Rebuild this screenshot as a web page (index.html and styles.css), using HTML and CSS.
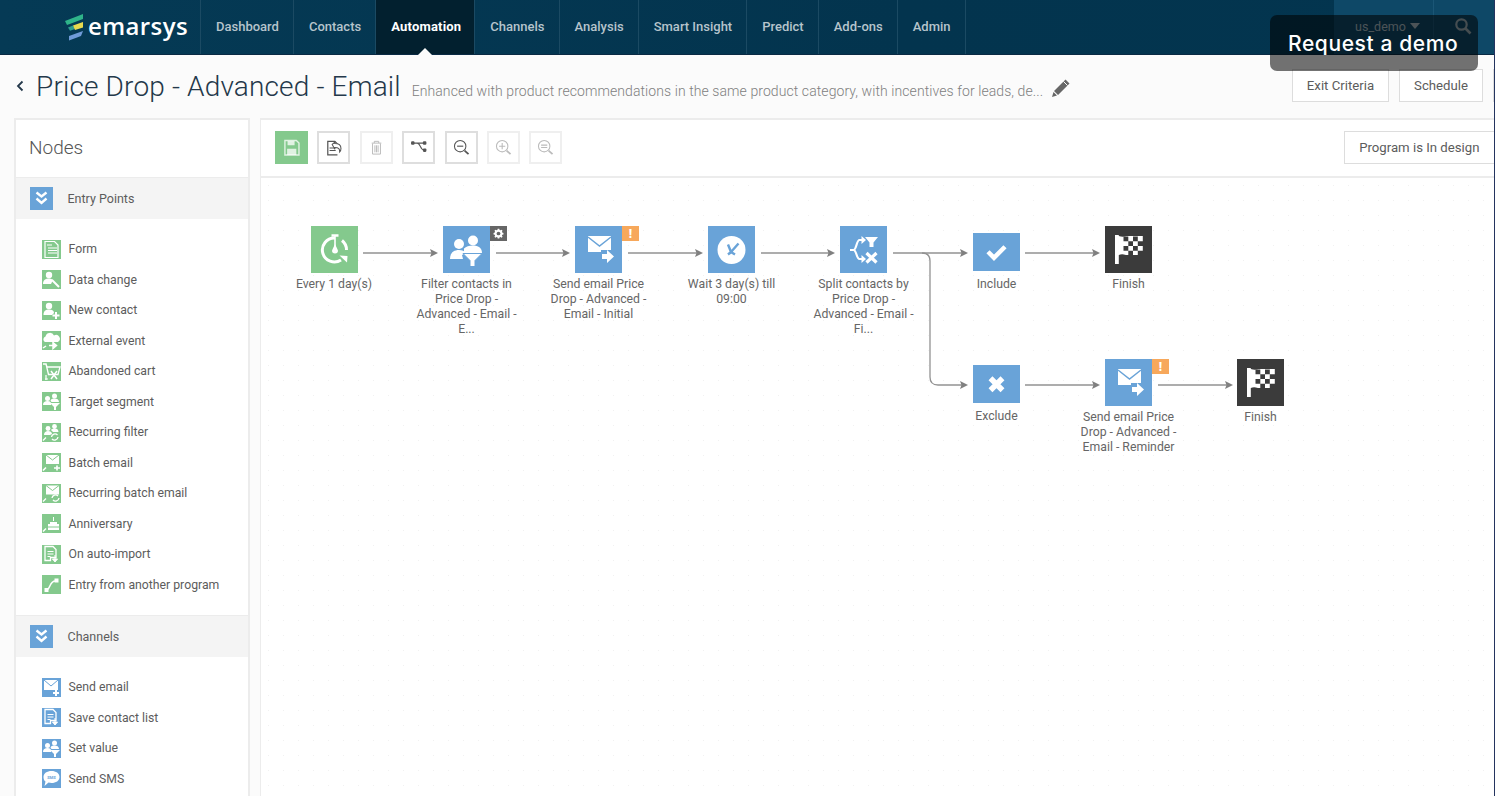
FILE: index.html
```html
<!DOCTYPE html>
<html lang="en">
<head>
<meta charset="utf-8">
<title>Price Drop - Advanced - Email</title>
<link rel="stylesheet" href="styles.css">
</head>
<body>
<svg class="defs" xmlns="http://www.w3.org/2000/svg">
  <symbol id="g-form" viewBox="0 0 19 19"><path d="M3 1.500h9.500l3.500 3.500v12.500H3z" fill="none" stroke="#fff" stroke-width="1.200"/><path d="M6 8h9M6 10.500h9M6 13h9M5 5h5" stroke="#fff" stroke-width="1.200"/></symbol>
  <symbol id="g-data" viewBox="0 0 19 19"><circle cx="7" cy="5" r="3.200" fill="#fff"/><path d="M1 14c0-4 2.500-5.500 6-5.500 1.500 0 3 .5 4 1.500l-2 4z" fill="#fff"/><path d="M10 10l7 7" stroke="#fff" stroke-width="2"/></symbol>
  <symbol id="g-new" viewBox="0 0 19 19"><circle cx="7" cy="5" r="3.200" fill="#fff"/><path d="M1.500 14c0-4 2-5.500 5.500-5.500s5 1.500 5 3.500l-2 2z" fill="#fff"/><path d="M14 11v7M10.500 14.500h7" stroke="#fff" stroke-width="2"/></symbol>
  <symbol id="g-ext" viewBox="0 0 19 19"><path d="M3 11a3 3 0 0 1 .5-5.500 4.500 4.500 0 0 1 8.500-1 3.500 3.500 0 0 1 4 6.500z" fill="#fff"/><path d="M7 14.500h6M11 11.500l3.500 3-3.500 3z" stroke="#fff" stroke-width="1.500" fill="#fff"/><path d="M1 17l3-2" stroke="#fff" stroke-width="1.500"/></symbol>
  <symbol id="g-cart" viewBox="0 0 19 19"><path d="M1 2h3l1 3h13l-2 7.500H6.500L4 2" fill="none" stroke="#fff" stroke-width="1.300"/><path d="M9 9l6 8M15 9l-6 8" stroke="#fff" stroke-width="1.500"/><path d="M3 17h3M4 13v5" stroke="#fff" stroke-width="1.200"/></symbol>
  <symbol id="g-seg" viewBox="0 0 19 19"><circle cx="5.500" cy="6.500" r="2.500" fill="#fff"/><circle cx="12.500" cy="4" r="2.500" fill="#fff"/><path d="M1 13c0-3 2-4 4.500-4S9 10 9 11.500V13zM8.500 8.500c.5-1.500 2-2 4-2 2.500 0 4.500 1 4.500 3.500H9.500z" fill="#fff"/><path d="M8 11h10l-4 4v3h-2v-3z" fill="#fff"/></symbol>
  <symbol id="g-rec" viewBox="0 0 19 19"><circle cx="6" cy="5.500" r="2.400" fill="#fff"/><circle cx="12.500" cy="3.500" r="2.400" fill="#fff"/><path d="M2 12c0-3 2-4 4-4s4 1 4 3l-2 1zM9 7c.8-1 2-1.500 3.500-1.500 2.500 0 4 1 4 3.500H11z" fill="#fff"/><path d="M9.500 14a3.500 3.500 0 0 1 6-2M16 14a3.500 3.500 0 0 1-6 2M1 17.500l3-3" stroke="#fff" stroke-width="1.300" fill="none"/></symbol>
  <symbol id="g-batch" viewBox="0 0 19 19"><path d="M4 2h13v9H4z" fill="#fff"/><path d="M4 2l6.500 5L17 2" fill="none" stroke="#84c98d" stroke-width="1"/><path d="M12 15h6M15 12.500v5M1 17.500l3-3" stroke="#fff" stroke-width="1.600"/></symbol>
  <symbol id="g-recbatch" viewBox="0 0 19 19"><path d="M4 1.500h13v9H4z" fill="#fff"/><path d="M4 1.500l6.500 5 6.500-5" fill="none" stroke="#84c98d" stroke-width="1"/><path d="M10 14a3.500 3.500 0 0 1 6-2M17 14a3.500 3.500 0 0 1-6 2M1 17.500l3-3" stroke="#fff" stroke-width="1.300" fill="none"/></symbol>
  <symbol id="g-ann" viewBox="0 0 19 19"><path d="M6 10h11v6H6z" fill="#fff"/><path d="M8 8h7v2H8zM11 3h1v4h-1z" fill="#fff"/><path d="M6 13h11" stroke="#84c98d"/><path d="M1 17.500l3-3" stroke="#fff" stroke-width="1.500"/></symbol>
  <symbol id="g-imp" viewBox="0 0 19 19"><path d="M3 1.500h8l3 3v8H8.500v3H3z" fill="none" stroke="#fff" stroke-width="1.300"/><path d="M5.500 6.500h6M5.500 9h6M5.500 11.500h3" stroke="#fff"/><path d="M13 10v6M10.500 14l2.500 3 2.500-3z" stroke="#fff" fill="#fff"/></symbol>
  <symbol id="g-entry" viewBox="0 0 19 19"><path d="M4.500 15c4 0 2.500-9 9-9" fill="none" stroke="#fff" stroke-width="1.500"/><path d="M2.500 13h4v4h-4zM12.500 3.500h4v4h-4z" fill="#fff"/></symbol>
  <symbol id="g-mail" viewBox="0 0 19 19"><path d="M2 2h14v10H2z" fill="#fff"/><path d="M2 2l7 6 7-6" fill="none" stroke="#69a3d8"/><path d="M11 15h6M14 12v6" stroke="#fff" stroke-width="2"/></symbol>
  <symbol id="g-list" viewBox="0 0 19 19"><path d="M3 1.500h8l3 3v8H8.500v3H3z" fill="none" stroke="#fff" stroke-width="1.300"/><path d="M5.500 6.500h6M5.500 9h6M5.500 11.500h3" stroke="#fff"/><path d="M13 10v6M10.500 14l2.500 3 2.500-3z" stroke="#fff" fill="#fff"/></symbol>
  <symbol id="g-sms" viewBox="0 0 19 19"><path d="M9.500 2c4.500 0 8 2.200 8 6s-3.500 6-8 6c-1 0-2 0-3-.4L2.500 17l1-4.500C2 11.500 1.500 9.800 1.500 8c0-3.800 3.500-6 8-6z" fill="#fff"/><text x="9.500" y="9.700" class="sms-t">SMS</text></symbol>

  <symbol id="n-clock" viewBox="0 0 47 47"><path d="M24 12A12 12 0 1 0 30 34" fill="none" stroke="#fff" stroke-width="3"/><path d="M31 14.500A12 12 0 0 1 35.500 24" fill="none" stroke="#fff" stroke-width="3"/><path d="M28.500 29.500l8 .5-.5 6.500z" fill="#fff"/><path d="M24 10v13" stroke="#fff" stroke-width="1.600"/><path d="M20.500 9.500h7" stroke="#fff" stroke-width="2.500"/><path d="M24 18l3 6.500a3 3 0 1 1-6 0z" fill="#fff"/></symbol>
  <symbol id="n-filter" viewBox="0 0 47 47"><circle cx="16" cy="18" r="5" fill="#fff"/><circle cx="30" cy="14.500" r="5" fill="#fff"/><path d="M7 33c0-6 3.500-9 9-9 3 0 5.500 1 7 3l-4 2 1 4zM21 22.500c2-2 5-3 9-3 5 0 9 2 9 7.500H21z" fill="#fff"/><path d="M20 27.500h19l-7 7v6h-5v-6z" fill="#fff" stroke="#69a3d8"/></symbol>
  <symbol id="n-mail" viewBox="0 0 47 47"><path d="M13 10h23v16H13z" fill="#fff"/><path d="M13 11l11.500 9L36 11" fill="none" stroke="#69a3d8" stroke-width="1.500"/><path d="M26 24h14v13H26z" fill="#69a3d8"/><path d="M27 28h5v-4l7 6.500-7 6.500v-4h-5z" fill="#fff"/></symbol>
  <symbol id="n-wait" viewBox="0 0 47 47"><circle cx="23.500" cy="24" r="14" fill="#fff"/><path d="M20 18.500l3 7.500 7.500-8.500M23 26l-3 2.500M23 26l4 2.500" fill="none" stroke="#69a3d8" stroke-width="2.400"/></symbol>
  <symbol id="n-split" viewBox="0 0 47 47"><path d="M25 11h13l-4.500 5.500V21h-4v-4.500z" fill="#fff"/><path d="M26.500 27l10 9.500M36.500 27l-10 9.500" stroke="#fff" stroke-width="3.200"/><path d="M10 24h3.500c3 0 3-10 6-10H23M13.500 24c3 0 3 9 6 9H23" fill="none" stroke="#fff" stroke-width="2.200"/><path d="M21.500 10l4.500 4-4.500 4zM21.500 29l4.500 4-4.500 4z" fill="#fff"/></symbol>
  <symbol id="n-check" viewBox="0 0 47 37"><path d="M15 18.500l6 6 11-11" fill="none" stroke="#fff" stroke-width="4.500"/></symbol>
  <symbol id="n-x" viewBox="0 0 47 37"><path d="M17.500 13l12 12M29.500 13l-12 12" fill="none" stroke="#fff" stroke-width="5.500"/></symbol>
  <symbol id="n-flag" viewBox="0 0 47 47"><path d="M10 9h3.800v29H10zM13.800 10c3 1 5 1 8 0h16v19H21c-3-1-5-1-7.200 0z" fill="#fff"/><path d="M18.500 10.500h4.800v4.800h-4.800zM28 10.500h4.800v4.800H28zM23.300 15.300h4.700v4.700h-4.700zM32.800 15.300h5.200v4.700h-5.200zM18.500 20h4.800v4.800h-4.800zM28 20h4.800v4.800H28zM23.300 24.800h4.700v4.200h-4.700zM32.800 24.800h5.200v4.200h-5.200z" fill="#3b3b3b"/></symbol>
  <symbol id="n-gear" viewBox="0 0 16 16"><path d="M8 2l1 .2.400 1.500 1 .4 1.400-.8 1.200 1.200-.8 1.400.4 1 1.500.4v1.800l-1.500.4-.4 1 .8 1.400-1.200 1.200-1.400-.8-1 .4-.4 1.500H7l-.4-1.500-1-.4-1.400.8L3 11.900l.8-1.400-.4-1-1.500-.4V7.300l1.500-.4.400-1-.8-1.400L4.200 3.300l1.400.8 1-.4L7 2.200z" fill="#fff"/><circle cx="8" cy="8" r="2.300" fill="#666"/></symbol>

  <symbol id="t-save" viewBox="0 0 33 33"><path d="M9 8.500h13l3 3v13.500H9z" fill="none" stroke="#fff" stroke-opacity=".75" stroke-width="1.600"/><path d="M12 9h8v5h-8zM11.500 18h10.500v7H11.500z" fill="#fff" fill-opacity=".75"/></symbol>
  <symbol id="t-load" viewBox="0 0 33 33"><path d="M10 18v-8.500h8l3 3M10 18v7h11" fill="none" stroke="#555" stroke-width="1.400"/><path d="M12 17h5M12 20h7" stroke="#555" stroke-width="1.200"/><path d="M15 13l3-2.500V12c4 0 7 1 7 5.500 0 1.500-.5 3-1.500 4 .3-3.500-1-5-5.500-5v2z" fill="#fff" stroke="#555" stroke-width="1.200"/></symbol>
  <symbol id="t-trash" viewBox="0 0 33 33"><path d="M11 11.500h11M14 11.500V9.500h5v2M12 12v12h9V12M14.700 14v8M16.500 14v8M18.300 14v8" fill="none" stroke="#bbb" stroke-width="1.100"/></symbol>
  <symbol id="t-tree" viewBox="0 0 33 33"><path d="M10 11.500h13M15 11.500c4 0 3 8 8 8" fill="none" stroke="#555" stroke-width="1.200"/><rect x="8" y="9.500" width="4" height="4" rx="1.200" fill="#555"/><rect x="21.500" y="9.500" width="4" height="4" rx="1.200" fill="#555"/><rect x="21.500" y="17.500" width="4" height="4" rx="1.200" fill="#555"/></symbol>
  <symbol id="t-zoomout" viewBox="0 0 33 33"><circle cx="15" cy="15" r="6.500" fill="none" stroke="#555" stroke-width="1.200"/><path d="M11.500 15h7" stroke="#555" stroke-width="1.300"/><path d="M20 20l4.500 4" stroke="#555" stroke-width="2"/></symbol>
  <symbol id="t-zoomin" viewBox="0 0 33 33"><circle cx="15" cy="15" r="6.500" fill="none" stroke="#bbb" stroke-width="1.200"/><path d="M11.500 15h7M15 11.500v7" stroke="#bbb" stroke-width="1.200"/><path d="M20 20l4.500 4" stroke="#bbb" stroke-width="2"/></symbol>
  <symbol id="t-zoomeq" viewBox="0 0 33 33"><circle cx="15" cy="15" r="6.500" fill="none" stroke="#bbb" stroke-width="1.200"/><path d="M11.500 13.800h7M11.500 16.400h7" stroke="#bbb" stroke-width="1.200"/><path d="M20 20l4.500 4" stroke="#bbb" stroke-width="2"/></symbol>
  <symbol id="s-double" viewBox="0 0 23 23"><path d="M6.500 5.500l5 4 5-4M6.500 11.500l5 4.500 5-4.500" fill="none" stroke="#fff" stroke-width="2.400"/></symbol>
</svg>

<div class="page">
  <header class="topbar">
    <a class="logo">
      <svg class="logo-mark" viewBox="0 0 20 28" width="20" height="28">
        <path d="M1 8L19 1v5L3 12z" fill="#2fb48a"/>
        <path d="M4 14.500L9 12.500l2 3.500-5 1.800z" fill="#2f9d8f"/>
        <path d="M9 12.500L19 9v5.500L11 17z" fill="#e6d94f"/>
        <path d="M5 23l14-5-2 5-12 4.500z" fill="#6f9bd8"/>
      </svg>
      <span class="logo-text">emarsys</span>
    </a>
    <nav class="nav">
      <a class="nav-item">Dashboard</a>
      <a class="nav-item">Contacts</a>
      <a class="nav-item active">Automation</a>
      <a class="nav-item">Channels</a>
      <a class="nav-item">Analysis</a>
      <a class="nav-item">Smart Insight</a>
      <a class="nav-item">Predict</a>
      <a class="nav-item">Add-ons</a>
      <a class="nav-item">Admin</a>
    </nav>
    <div class="user">
      <div class="user-name">us_demo <span class="user-caret"></span></div>
      <div class="user-search">
        <svg viewBox="0 0 18 18" width="18" height="18"><circle cx="7.500" cy="7.500" r="5.200" fill="none" stroke="#9aaab2" stroke-width="2.200"/><path d="M11.500 11.500l5 5" stroke="#9aaab2" stroke-width="2.600"/></svg>
      </div>
    </div>
  </header>

  <section class="titlebar">
    <a class="back">
      <svg viewBox="0 0 8 12" width="8" height="12"><path d="M6.500 1.500L2 6l4.500 4.500" fill="none" stroke="#24384a" stroke-width="1.800"/></svg>
    </a>
    <h1 class="title">Price Drop - Advanced - Email</h1>
    <p class="subtitle">Enhanced with product recommendations in the same product category, with incentives for leads, de...</p>
    <svg class="pencil" viewBox="0 0 20 20" width="20" height="20"><path d="M14.500 1.500l4 4L7 17l-4-4zM2.500 14l3.500 3.500-5 1.500z" fill="#666"/><path d="M12.500 3.500l4 4" stroke="#fbfbfb"/></svg>
    <div class="title-actions">
      <button class="btn exit">Exit Criteria</button>
      <button class="btn sched">Schedule</button>
      <span class="btn-clip"></span>
    </div>
  </section>

  <div class="workspace">
    <aside class="sidebar">
      <h2 class="side-title">Nodes</h2>
      <div class="sec-head"><svg class="sec-icon"><use href="#s-double"/></svg><span>Entry Points</span></div>
      <ul class="sec-list">
        <li><svg class="ic green"><use href="#g-form"/></svg>Form</li>
        <li><svg class="ic green"><use href="#g-data"/></svg>Data change</li>
        <li><svg class="ic green"><use href="#g-new"/></svg>New contact</li>
        <li><svg class="ic green"><use href="#g-ext"/></svg>External event</li>
        <li><svg class="ic green"><use href="#g-cart"/></svg>Abandoned cart</li>
        <li><svg class="ic green"><use href="#g-seg"/></svg>Target segment</li>
        <li><svg class="ic green"><use href="#g-rec"/></svg>Recurring filter</li>
        <li><svg class="ic green"><use href="#g-batch"/></svg>Batch email</li>
        <li><svg class="ic green"><use href="#g-recbatch"/></svg>Recurring batch email</li>
        <li><svg class="ic green"><use href="#g-ann"/></svg>Anniversary</li>
        <li><svg class="ic green"><use href="#g-imp"/></svg>On auto-import</li>
        <li><svg class="ic green"><use href="#g-entry"/></svg>Entry from another program</li>
      </ul>
      <div class="sec-head"><svg class="sec-icon"><use href="#s-double"/></svg><span>Channels</span></div>
      <ul class="sec-list">
        <li><svg class="ic blue"><use href="#g-mail"/></svg>Send email</li>
        <li><svg class="ic blue"><use href="#g-list"/></svg>Save contact list</li>
        <li><svg class="ic blue"><use href="#g-seg"/></svg>Set value</li>
        <li><svg class="ic blue"><use href="#g-sms"/></svg>Send SMS</li>
      </ul>
    </aside>

    <main class="editor">
      <div class="toolbar">
        <button class="tool save"><svg><use href="#t-save"/></svg></button>
        <button class="tool"><svg><use href="#t-load"/></svg></button>
        <button class="tool off"><svg><use href="#t-trash"/></svg></button>
        <button class="tool"><svg><use href="#t-tree"/></svg></button>
        <button class="tool"><svg><use href="#t-zoomout"/></svg></button>
        <button class="tool off"><svg><use href="#t-zoomin"/></svg></button>
        <button class="tool off"><svg><use href="#t-zoomeq"/></svg></button>
        <button class="btn status">Program is In design</button>
      </div>
      <div class="canvas">
        <svg class="wires" width="1234" height="618">
          <g class="wire">
            <path d="M102 75H172"/><path d="M235 75H304"/><path d="M367 75H437"/><path d="M500 75H569"/>
            <path d="M632 75H702"/><path d="M661 75c5 0 8 3 8 8V199c0 5 3 8 8 8H702"/>
            <path d="M764 75H834"/><path d="M764 207H834"/><path d="M897 207H967"/>
          </g>
          <g class="head">
            <path d="M177 75l-8-4 1.500 4-1.500 4z"/><path d="M309 75l-8-4 1.500 4-1.500 4z"/><path d="M442 75l-8-4 1.500 4-1.500 4z"/><path d="M574 75l-8-4 1.500 4-1.500 4z"/>
            <path d="M707 75l-8-4 1.500 4-1.500 4z"/><path d="M707 207l-8-4 1.500 4-1.500 4z"/>
            <path d="M839 75l-8-4 1.500 4-1.500 4z"/><path d="M839 207l-8-4 1.500 4-1.500 4z"/><path d="M972 207l-8-4 1.500 4-1.500 4z"/>
          </g>
        </svg>

        <div class="node n1"><div class="tile tgreen"><svg><use href="#n-clock"/></svg></div><div class="label">Every 1 day(s)</div></div>
        <div class="node n2"><div class="tile tblue"><svg><use href="#n-filter"/></svg><span class="badge gear"><svg><use href="#n-gear"/></svg></span></div><div class="label">Filter contacts in Price Drop - Advanced - Email - E...</div></div>
        <div class="node n3"><div class="tile tblue"><svg><use href="#n-mail"/></svg><span class="badge warn">!</span></div><div class="label">Send email Price Drop - Advanced - Email - Initial</div></div>
        <div class="node n4"><div class="tile tblue"><svg><use href="#n-wait"/></svg></div><div class="label">Wait 3 day(s) till 09:00</div></div>
        <div class="node n5"><div class="tile tblue"><svg><use href="#n-split"/></svg></div><div class="label">Split contacts by Price Drop - Advanced - Email - Fi...</div></div>
        <div class="node n6"><div class="tile tblue short"><svg><use href="#n-check"/></svg></div><div class="label">Include</div></div>
        <div class="node n7"><div class="tile tdark"><svg><use href="#n-flag"/></svg></div><div class="label">Finish</div></div>
        <div class="node n8"><div class="tile tblue short"><svg><use href="#n-x"/></svg></div><div class="label">Exclude</div></div>
        <div class="node n9"><div class="tile tblue"><svg><use href="#n-mail"/></svg><span class="badge warn">!</span></div><div class="label">Send email Price Drop - Advanced - Email - Reminder</div></div>
        <div class="node n10"><div class="tile tdark"><svg><use href="#n-flag"/></svg></div><div class="label">Finish</div></div>
      </div>
    </main>
  </div>

  <div class="demo">Request a demo</div>
</div>
</body>
</html>
```

FILE: styles.css
```css
* { box-sizing: border-box; }
html, body { margin: 0; height: 100%; overflow: hidden; }
body { font-family: Roboto, "Liberation Sans", sans-serif; color: #555; background: #fbfbfb; }
.defs { display: none; }
ul { list-style: none; margin: 0; padding: 0; }
h1, h2, p { margin: 0; font-weight: 300; }

.page { position: relative; width: 1495px; height: 796px; display: flex; flex-direction: column; overflow: hidden; border-right: 1px solid #24345f; }

/* top bar */
.topbar { flex: 0 0 55px; display: flex; background: linear-gradient(90deg, #053a55 0%, #03344e 60%, #03354f 100%); border-bottom: 1px solid #0a2a44; }
.logo { flex: 0 0 200px; display: flex; align-items: center; padding-left: 64px; gap: 4px; }
.logo-mark { flex: none; }
.logo-text { font-family: "Open Sans", sans-serif; font-weight: 600; font-size: 24px; letter-spacing: .4px; color: #fff; line-height: 1; margin-top: -3px; }
.nav { display: flex; }
.nav-item { position: relative; display: flex; align-items: center; padding: 0 14px 2px 15px; border-left: 1px solid #1b4a63; font-size: 13px; font-weight: 500; color: #b6c4cc; }
.nav-item.active { padding-right: 13px; background: #02202f; color: #fff; font-weight: 700; letter-spacing: .2px; }
.nav-item.active::after { content: ""; position: absolute; left: 50%; bottom: -1px; margin-left: -7px; border: 7px solid transparent; border-top: 0; border-bottom-color: #fbfbfb; }
.nav-item:last-child { border-right: 1px solid #1b4a63; }
.user { margin-left: auto; display: flex; background: #0e4867; width: 160px; }
.user-name { flex: 0 0 100px; display: flex; align-items: center; justify-content: center; gap: 4px; font-size: 12.500px; color: #a8b8c0; border-right: 1px solid #1b5676; padding-left: 8px; padding-bottom: 2px; }
.user-caret { width: 0; height: 0; border: 5.500px solid transparent; border-top: 6px solid #a8b8c0; border-bottom: 0; }
.user-search { flex: 1; display: flex; align-items: center; padding-left: 20px; padding-bottom: 2px; }

/* title row */
.titlebar { flex: 0 0 63px; display: flex; align-items: center; padding-left: 16px; }
.back { display: flex; margin-right: 12px; margin-top: -2px; }
.title { font-size: 28px; color: #24384a; line-height: 1; white-space: nowrap; letter-spacing: .15px; }
.subtitle { margin-left: 11px; margin-top: 8px; font-size: 14px; letter-spacing: .08px; color: #808080; white-space: nowrap; }
.pencil { margin-left: 8px; margin-top: 3px; flex: none; }
.title-actions { margin-left: auto; display: flex; align-items: center; gap: 10px; margin-top: -3px; }
.btn { height: 33px; padding: 0 14px; background: #fff; border: 1px solid #ddd; font: 400 13.200px Roboto, sans-serif; color: #5c5c5c; white-space: nowrap; }
.btn-clip { width: 1px; height: 33px; background: #ddd; }

/* workspace */
.workspace { flex: 1; min-height: 0; display: flex; padding-left: 14px; gap: 10px; }
.sidebar { flex: 0 0 236px; background: #fff; border: 2px solid #ececec; border-bottom: 0; overflow: hidden; }
.side-title { height: 57px; display: flex; align-items: center; padding: 0 0 3px 13px; font-size: 19px; color: #555; }
.sec-head { height: 42px; display: flex; align-items: center; gap: 15px; padding-left: 13.500px; background: #f4f4f4; border-top: 1px solid #ececec; font-size: 12.500px; color: #5c5c5c; }
.sec-icon { width: 23px; height: 23px; background: #69a3d8; }
.sec-list { padding: 15px 0; }
.sec-list li { height: 30.500px; display: flex; align-items: center; gap: 7.500px; padding-left: 26px; font-size: 12.250px; color: #5c5c5c; }
.ic { width: 19px; height: 19px; flex: none; }
.green { background: #84c98d; }
.blue { background: #69a3d8; }
.sms-t { font: 700 4px Roboto, sans-serif; fill: #69a3d8; text-anchor: middle; }

/* editor */
.editor { flex: 1; min-width: 0; display: flex; flex-direction: column; background: #fff; border-top: 2px solid #ececec; border-left: 1px solid #ececec; }
.toolbar { flex: 0 0 58px; display: flex; align-items: center; gap: 9.400px; padding: 0 0 2px 14px; border-bottom: 2px solid #ececec; }
.tool { width: 33px; height: 33px; padding: 0; background: #fff; border: 2px solid #dedede; }
.tool svg { display: block; width: 29px; height: 29px; }
.tool.off { border-color: #efefef; }
.tool.save { background: #84c98d; border-color: #84c98d; }
.status { margin-left: auto; border-right: 0; padding: 0 14.500px; }

/* canvas */
.canvas { position: relative; flex: 1; background-color: #fff; background-image: radial-gradient(circle, #f1f1f1 0.7px, transparent 1px); background-size: 15px 15px; }
.wires { position: absolute; left: 0; top: 0; }
.wire path { fill: none; stroke: #929292; stroke-width: 1.300; }
.head path { fill: #808080; }
.node { position: absolute; width: 110px; display: flex; flex-direction: column; align-items: center; }
.n1 { left: 18px; top: 48px; }
.n2 { left: 150.500px; top: 48px; }
.n3 { left: 282.500px; top: 48px; }
.n4 { left: 415.500px; top: 48px; }
.n5 { left: 547.500px; top: 48px; }
.n6 { left: 680.500px; top: 55px; }
.n7 { left: 812.500px; top: 48px; }
.n8 { left: 680.500px; top: 187px; }
.n9 { left: 812.500px; top: 181px; }
.n10 { left: 944.500px; top: 181px; }
.tile { position: relative; width: 47px; height: 47px; flex: none; }
.tile > svg { display: block; width: 100%; height: 100%; }
.tile.short { height: 37.500px; }
.tgreen { background: #84c98d; }
.tblue { background: #69a3d8; }
.tdark { background: #3b3b3b; }
.label { margin-top: 3.500px; font-size: 12.250px; line-height: 15px; text-align: center; color: #666; }
.short + .label { margin-top: 6.500px; }
.badge { position: absolute; left: 47px; top: 0; width: 17px; height: 15px; display: flex; align-items: center; justify-content: center; color: #fff; font-size: 12px; font-weight: 900; }
.badge svg { width: 13px; height: 13px; }
.gear { background: #666; }
.warn { background: #f7a85b; }

/* overlay */
.demo { position: absolute; left: 1270px; top: 15px; width: 208px; height: 56px; padding: 16px 0 0 18px; border-radius: 7px; background: rgba(0, 0, 0, .55); color: #fff; font-family: Inter, sans-serif; font-weight: 500; font-size: 21px; line-height: 26px; letter-spacing: .6px; white-space: nowrap; }
```
